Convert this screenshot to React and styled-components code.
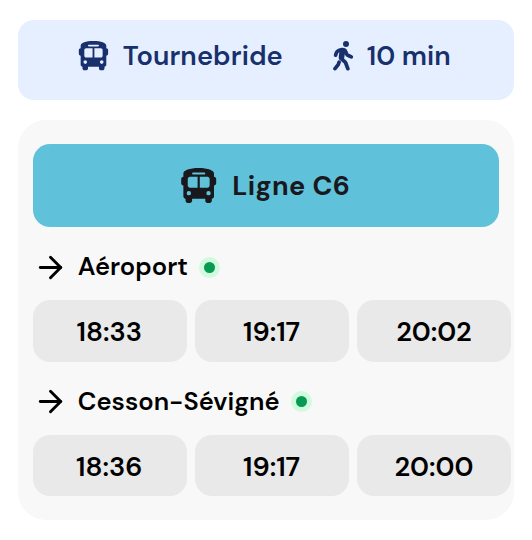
import React from "react";
import styled, { createGlobalStyle } from "styled-components";
import { ArrowRight } from "lucide-react";
import { FaBus } from "react-icons/fa6";

const GlobalStyle = createGlobalStyle`
  *, *::before, *::after { box-sizing: border-box; }
  body {
    margin: 0;
    background: #fff;
    color: #000;
    font-family: "DM Sans", Inter, "Liberation Sans", sans-serif;
    font-weight: 600;
    font-variation-settings: "opsz" 14;
  }
`;

const Page = styled.main`
  display: flex;
  flex-direction: column;
  gap: 20.5px;
  width: 532px;
  height: 540px;
  padding: 19.5px 17.7px 20px 17.5px;
`;

const StopBanner = styled.header`
  display: flex;
  height: 80px;
  padding: 0 0 6.8px 61.5px;
  align-items: center;
  border-radius: 16px;
  background: #e5efff;
  color: #18306c;
`;

const BusIcon = styled(FaBus)`
  flex: none;
  width: ${(p) => p.$size * 1.125}px;
  height: ${(p) => p.$size}px;
  margin: 0 ${(p) => -p.$size / 16}px;
`;

const WalkSvg = styled.svg`
  flex: none;
  width: 21px;
  height: 30px;
`;

const WalkIcon = () => (
  <WalkSvg
    viewBox="0 0 21 30"
    fill="none"
    stroke="currentColor"
    strokeWidth="3.7"
    strokeLinecap="round"
    strokeLinejoin="round"
    aria-hidden="true"
  >
    <circle cx="13" cy="3" r="3" fill="currentColor" stroke="none" />
    <path d="M2.6 14.2 3.1 12.5Q4 9.7 7 9L9 8.7Q11.8 8.5 12.7 10.8L13.5 12.7Q14.1 14 15.3 14.5L18.3 15.9" />
    <path fill="currentColor" strokeWidth="3" d="M8 9.5 10.8 9.8 9.6 17.4 7.2 16.7Z" />
    <path d="M7.8 17.4 11.5 20.5Q12.6 21.3 12.9 22.5L14.8 27.7" />
    <path d="M6.1 21.2 5.2 23.6 2 27.6" />
  </WalkSvg>
);

const Label = styled.span`
  flex: none;
  width: ${(p) => p.$width}px;
  margin-left: ${(p) => p.$gap || 0}px;
  font-size: ${(p) => p.$size || 27.2}px;
  font-weight: ${(p) => p.$weight || 600};
  letter-spacing: ${(p) => p.$spacing || 0}px;
  line-height: 36px;
  white-space: nowrap;
`;

const WalkTime = styled.div`
  display: flex;
  align-items: center;
  margin-left: 51px;
`;

const LineCard = styled.section`
  height: 400px;
  padding: 24px 15.3px;
  border-radius: 28px;
  background: #f8f8f8;
`;

const LineHeader = styled.div`
  display: flex;
  align-items: center;
  height: 83px;
  padding-left: 148.5px;
  border-radius: 17px;
  background: #60c2da;
  color: #19191d;
`;

const Direction = styled.div`
  margin-top: 22px;
`;

const Destination = styled.div`
  display: flex;
  align-items: center;
  height: 36px;
  margin-bottom: 15.2px;
`;

const DirectionArrow = styled(ArrowRight)`
  flex: none;
  width: 35px;
  height: 35px;
`;

const LiveDot = styled.i`
  flex: none;
  width: 21px;
  height: 21px;
  margin-left: 10.5px;
  border: 5px solid #d2fade;
  border-radius: 50%;
  background: #069a52;
`;

const Times = styled.div`
  display: grid;
  grid-template-columns: repeat(3, 154px);
  gap: 8.3px;
`;

const Time = styled.time`
  display: flex;
  align-items: center;
  justify-content: center;
  height: 61.5px;
  padding: 1px 1px 0 0;
  border-radius: 17px;
  background: #e9e9e9;
  font-size: 27.2px;
`;

const directions = [
  { name: "Aéroport", width: 110, times: ["18:33", "19:17", "20:02"] },
  { name: "Cesson-Sévigné", width: 202, times: ["18:36", "19:17", "20:00"] },
];

export default function App() {
  return (
    <>
      <GlobalStyle />
      <Page>
        <StopBanner>
          <BusIcon $size={29.3} />
          <Label $gap={14.5} $width={159} $spacing={0.1}>Tournebride</Label>
          <WalkTime>
            <WalkIcon />
            <Label $gap={13} $width={84}>10 min</Label>
          </WalkTime>
        </StopBanner>
        <LineCard>
          <LineHeader>
            <BusIcon $size={35} />
            <Label $gap={16} $width={118} $size={27} $weight={700} $spacing={0.4}>Ligne C6</Label>
          </LineHeader>
          {directions.map((d) => (
            <Direction key={d.name}>
              <Destination>
                <DirectionArrow />
                <Label $gap={10} $width={d.width + 0.5} $size={25.5}>{d.name}</Label>
                <LiveDot />
              </Destination>
              <Times>
                {d.times.map((t) => (
                  <Time key={t}>{t}</Time>
                ))}
              </Times>
            </Direction>
          ))}
        </LineCard>
      </Page>
    </>
  );
}
